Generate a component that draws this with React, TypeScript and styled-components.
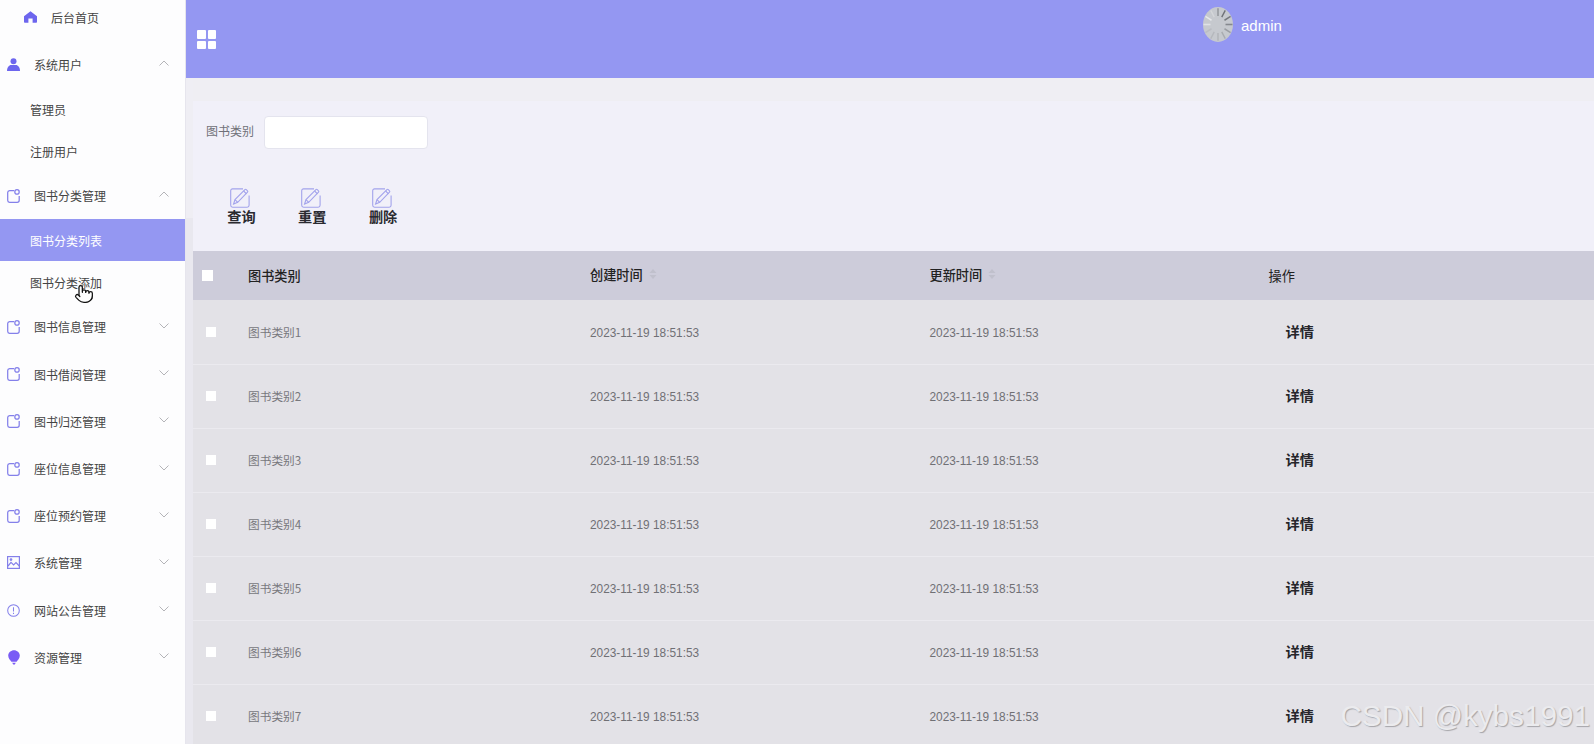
import React from "react";
import styled, { createGlobalStyle } from "styled-components";
import { Pointer } from "lucide-react";

const Global = createGlobalStyle`
  html, body { margin: 0; padding: 0; height: 744px; overflow: hidden; background: #efeef3; }
  * { box-sizing: border-box; }
  body { font-family: "Liberation Sans", "Noto Sans CJK SC", sans-serif; }
`;

const cjk = `"Noto Sans CJK SC", "Liberation Sans", sans-serif`;

const Page = styled.div`
  position: relative;
  display: flex;
  width: 1594px;
  height: 744px;
  overflow: hidden;
`;

const Sidebar = styled.nav`
  width: 186px;
  flex: none;
  background: #fdfdfe;
  border-right: 1px solid #e6e5ed;
  font-family: ${cjk};
  font-size: 12px;
  color: #444;
`;

const HomeItem = styled.div`
  height: 41px;
  padding: 0 0 7px 24px;
  display: flex;
  align-items: center;
  gap: 14px;
`;

const MenuItem = styled.div`
  height: 47.2px;
  padding-left: 7px;
  padding-right: 16px;
  display: flex;
  align-items: center;
`;

const MenuIcon = styled.span`
  width: 13px;
  height: 15px;
  display: flex;
  align-items: center;
  justify-content: center;
  flex: none;
  color: #8480ea;
`;

const MenuLabel = styled.span`
  margin-left: 14px;
  flex: 1;
`;

const Chevron = styled.svg<{ $up?: boolean }>`
  width: 10px;
  height: 6px;
  margin-top: ${(p) => (p.$up ? "-3px" : "-2px")};
  flex: none;
`;

const SubItem = styled.div<{ $active?: boolean }>`
  height: 42px;
  padding-left: 30px;
  display: flex;
  align-items: center;
  background: ${(p) => (p.$active ? "#9497f2" : "transparent")};
  color: ${(p) => (p.$active ? "#fff" : "#444")};
`;

const Content = styled.main`
  flex: 1;
  min-width: 0;
  display: flex;
  flex-direction: column;
`;

const Header = styled.header`
  height: 78px;
  flex: none;
  background: #9497f2;
  display: flex;
  align-items: flex-start;
  padding-left: 11px;
`;

const GridButton = styled.div`
  margin-top: 30px;
  display: grid;
  grid-template-columns: 8.5px 8.5px;
  grid-auto-rows: 8.5px;
  gap: 2px;
`;

const GridCell = styled.span`
  background: #fff;
  border-radius: 1px;
`;

const UserBox = styled.div`
  margin-left: 987px;
  margin-top: 7px;
  display: flex;
  align-items: flex-start;
  gap: 8px;
  color: #fff;
  font-size: 15px;
`;

const UserName = styled.span`
  margin-top: 10px;
  line-height: 18px;
`;

const Body = styled.div`
  flex: 1;
  padding: 23px 0 0 7px;
  background: linear-gradient(#efeef4 140px, #e9e8ef 140px) left top / 7px 100% no-repeat, #efeef3;
  overflow: hidden;
`;

const SearchPanel = styled.section`
  height: 150px;
  background: #f1f0f9;
  padding: 15px 0 0 13px;
`;

const SearchRow = styled.div`
  display: flex;
  align-items: center;
  gap: 10px;
`;

const SearchLabel = styled.label`
  font-family: ${cjk};
  font-size: 12px;
  line-height: 14px;
  margin-top: -3px;
  color: #707078;
`;

const SearchInput = styled.div`
  width: 164px;
  height: 33px;
  background: #fff;
  border: 1px solid #e4e4ee;
  border-radius: 4px;
`;

const Actions = styled.div`
  margin-top: 39px;
  padding-left: 21px;
  display: flex;
  gap: 41.8px;
`;

const ActionButton = styled.div`
  width: 29px;
  display: flex;
  flex-direction: column;
  align-items: center;
  font-family: ${cjk};
  font-size: 14.2px;
  font-weight: 700;
  line-height: 20px;
  color: #2a2a30;
`;

const ActionIcon = styled.svg`
  width: 20px;
  height: 20px;
  margin-right: 3px;
`;

const ActionText = styled.span`
  margin-top: -2px;
`;

const Table = styled.section`
  font-family: ${cjk};
`;

const columns = "55px 342px 339.5px 339px 1fr";

const HeadRow = styled.div`
  height: 49px;
  display: grid;
  grid-template-columns: ${columns};
  align-items: center;
  background: #cdccda;
  font-size: 13.2px;
  font-weight: 500;
  color: #222;
`;

const HeadCell = styled.div<{ $raised?: boolean }>`
  display: flex;
  align-items: center;
  gap: 6px;
  margin-top: ${(p) => (p.$raised ? "-3px" : "-1px")};
`;

const HeadAction = styled.div`
  margin-top: -1px;
  font-weight: 400;
`;

const Row = styled.div`
  height: 64px;
  padding-bottom: 1px;
  display: grid;
  grid-template-columns: ${columns};
  align-items: center;
  background: #e3e2e7;
  font-size: 11.7px;
  color: #77777c;
  & + & {
    padding-bottom: 2px;
    border-top: 1px solid #ebeaef;
  }
`;

const DateCell = styled.div`
  font-family: "Liberation Sans", sans-serif;
  font-size: 11.85px;
  margin-top: 2px;
  color: #707075;
`;

const Detail = styled.div`
  padding-left: 17px;
  font-size: 14.2px;
  font-weight: 700;
  margin-top: -1px;
  color: #26262b;
`;

const HeadCheck = styled.span`
  display: block;
  width: 11px;
  height: 11px;
  margin: 0 0 0 9px;
  background: #fff;
`;

const RowCheck = styled.span`
  display: block;
  width: 10px;
  height: 10px;
  margin-left: 13px;
  background: #fff;
`;

const Sorter = styled.svg`
  width: 8px;
  height: 10px;
  flex: none;
`;

const Watermark = styled.div`
  position: absolute;
  right: 4px;
  bottom: 9px;
  font-family: "Liberation Sans", sans-serif;
  font-size: 29.7px;
  line-height: 38px;
  color: #ebebee;
  text-shadow: 1px 1px 1px #a5a5a9;
`;

const Cursor = styled.div`
  position: absolute;
  left: 74px;
  top: 284px;
  color: #111;
`;

const Ring = () => (
  <svg width="13" height="14" viewBox="0 0 13 14" fill="none" stroke="currentColor" strokeWidth="1.25">
    <path d="M7 1.6H2.6A2 2 0 0 0 .7 3.6v7.7a2 2 0 0 0 1.9 2h7.6a2 2 0 0 0 2-2V7" />
    <circle cx="10" cy="2.9" r="2.2" />
  </svg>
);

const HomeIcon = () => (
  <svg width="13" height="12" viewBox="0 0 13 12" fill="#6d66ee">
    <path d="M6.5 .2 13 5.2V11a.8.8 0 0 1-.8.8H8.6V7.6H4.4v4.2H.8A.8.8 0 0 1 0 11V5.2Z" />
  </svg>
);

const UserIcon = () => (
  <svg width="13" height="13" viewBox="0 0 13 13" fill="#6d66ee">
    <circle cx="6.5" cy="3.2" r="3" />
    <path d="M0 13c0-3.6 2-6 4.2-6h4.6C11 7 13 9.4 13 13Z" />
  </svg>
);

const PictureIcon = () => (
  <svg width="13" height="13" viewBox="0 0 13 13" fill="none" stroke="currentColor" strokeWidth="1.2">
    <rect x=".6" y=".6" width="11.8" height="11.8" />
    <path d="M1 10 4 6.4l2.6 2.6L9 6.6l3.3 3.4" />
    <circle cx="4" cy="3.6" r=".8" />
  </svg>
);

const AlertIcon = () => (
  <svg width="15" height="15" viewBox="0 0 15 15" fill="none" stroke="currentColor" strokeWidth="1.2">
    <circle cx="7.5" cy="7.5" r="6.7" />
    <path d="M7.5 3.8v4.8M7.5 10.2v1.2" />
  </svg>
);

const BulbIcon = () => (
  <svg width="12" height="15" viewBox="0 0 12 15" fill="#7a5cf5">
    <path d="M6 .2c3 0 5.8 2.4 5.8 5.4 0 2.8-2.2 4.8-3.2 6.2H3.4C2.4 10.4.2 8.4.2 5.6.2 2.6 3 .2 6 .2Z" />
    <path d="M4.2 12.8h3.6L6.8 14.6H5.2Z" />
  </svg>
);

const ChevronIcon = ({ up }: { up?: boolean }) => (
  <Chevron $up={up} viewBox="0 0 10 6" fill="none" stroke="#b4b4b8" strokeWidth="1">
    <path d={up ? "M.5 5.5 5 1l4.5 4.5" : "M.5.5 5 5 9.5.5"} />
  </Chevron>
);

const EditIcon = () => (
  <ActionIcon viewBox="0 0 20 20" fill="none" stroke="#a3a3ec" strokeWidth="1.1">
    <path d="M13 .9H2.6A1.8 1.8 0 0 0 .7 2.7v14.6c0 1 .8 1.9 1.9 1.9h14.6c1 0 1.9-.9 1.9-1.9V7.4" />
    <path d="M3.6 16 5 11.6 14.9 1.6a1 1 0 0 1 1.4 0l1.2 1.2a1 1 0 0 1 0 1.4L7.7 14.3Z" />
    <path d="M13.6 3l2.9 2.9M5 11.6l2.7 2.7" />
  </ActionIcon>
);

const SortIcon = () => (
  <Sorter viewBox="0 0 8 10" fill="#c0c0cc">
    <path d="M4 0 7.5 4H.5ZM4 10 .5 6h7Z" />
  </Sorter>
);

const Spinner = () => {
  const spokes = Array.from({ length: 12 }, (_, i) => i);
  const shade = ["#8f9297", "#6e7176", "#75787d", "#85888d", "#9a9da2", "#a8abb0", "#b0b3b8", "#b5b8bd", "#babdc2", "#dfe1e4", "#e6e8ea", "#d4d6d9"];
  return (
    <svg width="30" height="35" viewBox="0 0 30 35">
      <ellipse cx="15" cy="17.5" rx="15" ry="17.5" fill="#c6c9ce" />
      {spokes.map((i) => (
        <line
          key={i}
          x1="15"
          y1="3"
          x2="15"
          y2="10"
          stroke={shade[i]}
          strokeWidth="1.4"
          transform={`translate(15 17.5) scale(1 1.12) rotate(${i * 30}) translate(-15 -17.5)`}
        />
      ))}
    </svg>
  );
};

const rows = [1, 2, 3, 4, 5, 6, 7];
const lowerMenus: [React.ReactNode, string][] = [
  [<Ring />, "图书信息管理"],
  [<Ring />, "图书借阅管理"],
  [<Ring />, "图书归还管理"],
  [<Ring />, "座位信息管理"],
  [<Ring />, "座位预约管理"],
  [<PictureIcon />, "系统管理"],
  [<AlertIcon />, "网站公告管理"],
  [<BulbIcon />, "资源管理"],
];

export default function App() {
  return (
    <Page>
      <Global />
      <Sidebar>
        <HomeItem>
          <HomeIcon />
          <span>后台首页</span>
        </HomeItem>
        <MenuItem>
          <MenuIcon><UserIcon /></MenuIcon>
          <MenuLabel>系统用户</MenuLabel>
          <ChevronIcon up />
        </MenuItem>
        <SubItem>管理员</SubItem>
        <SubItem>注册用户</SubItem>
        <MenuItem>
          <MenuIcon><Ring /></MenuIcon>
          <MenuLabel>图书分类管理</MenuLabel>
          <ChevronIcon up />
        </MenuItem>
        <SubItem $active>图书分类列表</SubItem>
        <SubItem>图书分类添加</SubItem>
        {lowerMenus.map(([icon, label]) => (
          <MenuItem key={label}>
            <MenuIcon>{icon}</MenuIcon>
            <MenuLabel>{label}</MenuLabel>
            <ChevronIcon />
          </MenuItem>
        ))}
      </Sidebar>
      <Content>
        <Header>
          <GridButton>
            <GridCell />
            <GridCell />
            <GridCell />
            <GridCell />
          </GridButton>
          <UserBox>
            <Spinner />
            <UserName>admin</UserName>
          </UserBox>
        </Header>
        <Body>
          <SearchPanel>
            <SearchRow>
              <SearchLabel>图书类别</SearchLabel>
              <SearchInput />
            </SearchRow>
            <Actions>
              {["查询", "重置", "删除"].map((t) => (
                <ActionButton key={t}>
                  <EditIcon />
                  <ActionText>{t}</ActionText>
                </ActionButton>
              ))}
            </Actions>
          </SearchPanel>
          <Table>
            <HeadRow>
              <HeadCheck />
              <HeadCell>图书类别</HeadCell>
              <HeadCell $raised>创建时间<SortIcon /></HeadCell>
              <HeadCell $raised>更新时间<SortIcon /></HeadCell>
              <HeadAction>操作</HeadAction>
            </HeadRow>
            {rows.map((n) => (
              <Row key={n}>
                <RowCheck />
                <div>图书类别{n}</div>
                <DateCell>2023-11-19 18:51:53</DateCell>
                <DateCell>2023-11-19 18:51:53</DateCell>
                <Detail>详情</Detail>
              </Row>
            ))}
          </Table>
        </Body>
      </Content>
      <Cursor>
        <Pointer size={20} fill="#fff" strokeWidth={1.5} />
      </Cursor>
      <Watermark>CSDN @kybs1991</Watermark>
    </Page>
  );
}
